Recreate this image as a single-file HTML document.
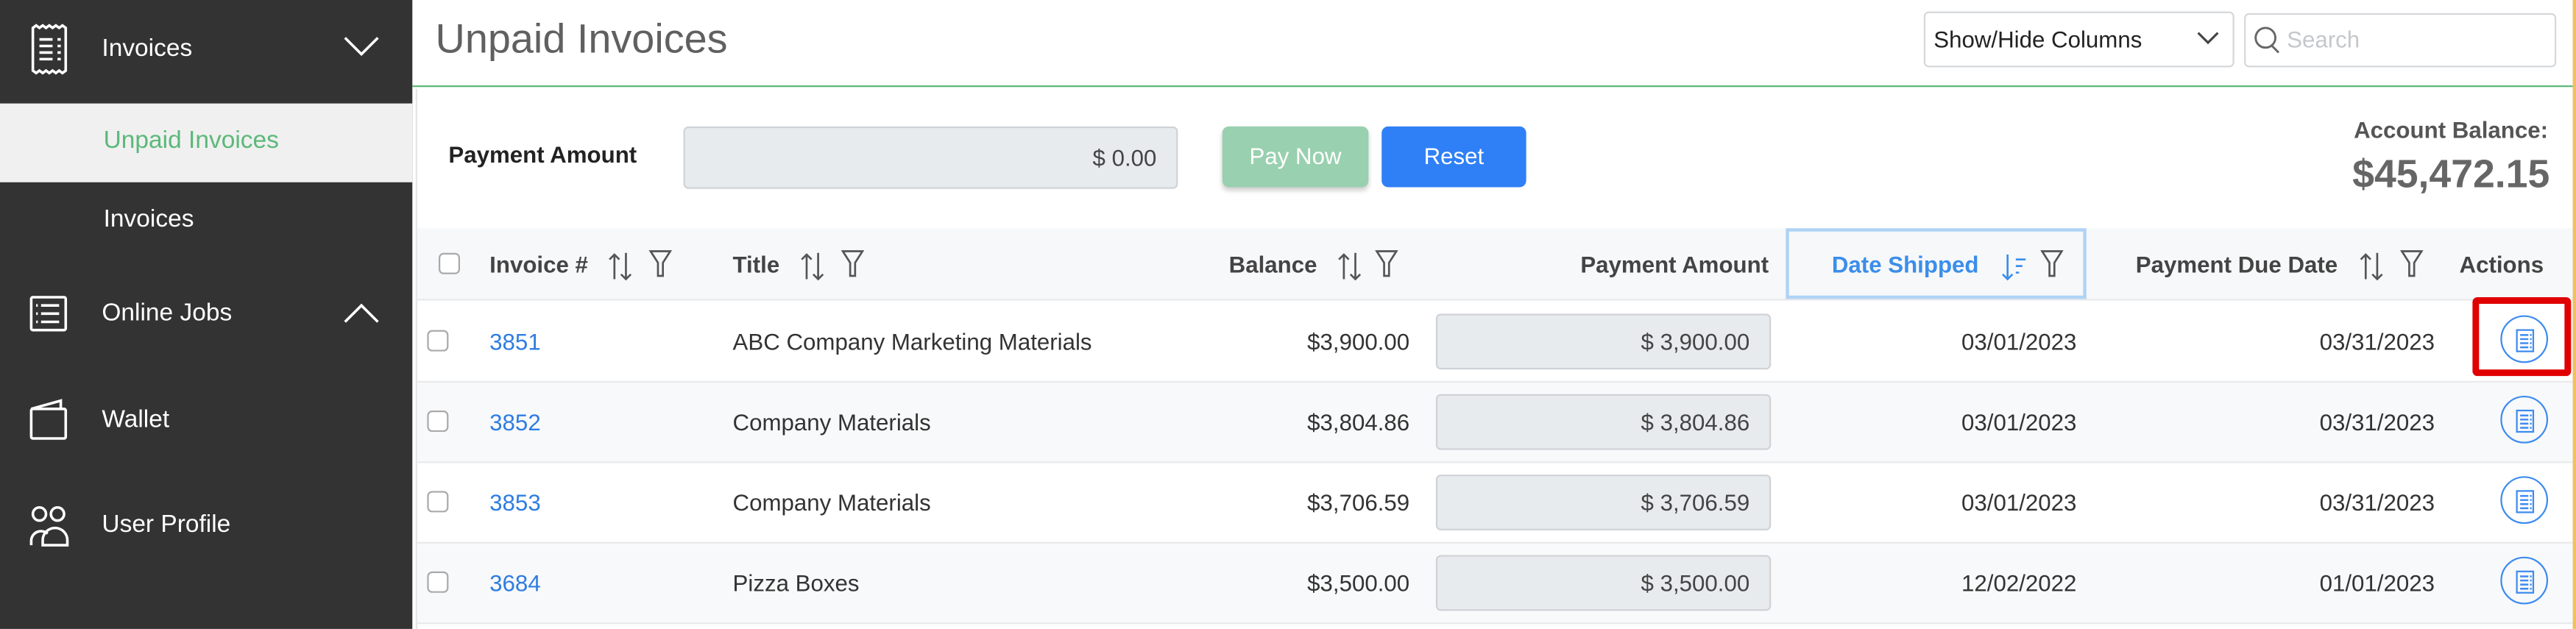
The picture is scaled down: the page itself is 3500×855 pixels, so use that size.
<!DOCTYPE html>
<html><head><meta charset="utf-8"><style>
*{box-sizing:border-box;margin:0;padding:0}
html,body{width:3500px;height:854px;overflow:hidden;background:#fff}
#s{position:absolute;left:0;top:0;width:1568px;height:383px;transform:scale(2.23214);transform-origin:0 0;font-family:"Liberation Sans",sans-serif;font-size:14px;color:#333}
.a{position:absolute}
.side{left:0;top:0;width:251px;height:383px;background:#333}
.w{color:#fff;font-size:15px}
.hd{font-weight:bold;color:#444;font-size:14px}
.cb{width:13px;height:13px;border:1px solid #aaa;border-radius:3px;background:#fff}
.lnk{color:#2f7de1}
.inp{background:#e8ebee;border:1px solid #cfd3d7;border-radius:3px;text-align:right;padding-right:12px;color:#444}
.ac{width:29px;height:29px;border:1.5px solid #3d8bf0;border-radius:50%}
.r{text-align:right}
</style></head><body><div id="s">
<div class="a side"></div>
<svg class="a" style="left:18px;top:14px" width="24" height="32" viewBox="0 0 24 32" fill="none" stroke="#fff" stroke-width="1.6"><path d="M2 3 l2 -1.5 2 1.5 2 -1.5 2 1.5 2 -1.5 2 1.5 2 -1.5 2 1.5 2 -1.5 2 1.5 V29 l-2 1.5 -2 -1.5 -2 1.5 -2 -1.5 -2 1.5 -2 -1.5 -2 1.5 -2 -1.5 -2 1.5 -2 -1.5Z"/><path d="M6 10h8M6 14h8M6 18h8M6 22h8M17 10h2M17 14h2M17 18h2M17 22h2"/></svg>
<div class="a w" style="left:62px;top:21px">Invoices</div>
<svg class="a" style="left:209px;top:22px" width="22" height="12"><path d="M1 1l10 10 10-10" fill="none" stroke="#fff" stroke-width="1.6"/></svg>
<div class="a" style="left:0;top:63px;width:251px;height:48px;background:#f0f0f0"></div>
<div class="a" style="left:63px;top:77px;color:#5cb87a;font-size:15px">Unpaid Invoices</div>
<div class="a w" style="left:63px;top:125px">Invoices</div>
<svg class="a" style="left:18px;top:180px" width="23" height="22" fill="none" stroke="#fff" stroke-width="1.6"><rect x="1" y="1" width="21" height="20" rx="1"/><path d="M7 6h11M7 11h11M7 16h11M4 6h1M4 11h1M4 16h1"/></svg>
<div class="a w" style="left:62px;top:182px">Online Jobs</div>
<svg class="a" style="left:209px;top:184px" width="22" height="13"><path d="M1 12l10-10 10 10" fill="none" stroke="#fff" stroke-width="1.6"/></svg>
<svg class="a" style="left:18px;top:242px" width="23" height="26" fill="none" stroke="#fff" stroke-width="1.6"><rect x="1" y="7" width="21" height="18" rx="1"/><path d="M1 7l18-5v5"/></svg>
<div class="a w" style="left:62px;top:247px">Wallet</div>
<svg class="a" style="left:18px;top:308px" width="25" height="25" fill="none" stroke="#fff" stroke-width="1.6"><circle cx="6" cy="5" r="4"/><circle cx="17" cy="5" r="4"/><path d="M1 24v-3a6 6 0 0 1 10-4M8 24v-3a7 7 0 0 1 15 0v3z"/></svg>
<div class="a w" style="left:62px;top:311px">User Profile</div>

<div class="a" style="left:265px;top:10px;font-size:25px;color:#606060">Unpaid Invoices</div>
<div class="a" style="left:1171px;top:7px;width:189px;height:34px;border:1px solid #d5d8db;border-radius:3px"></div>
<div class="a" style="left:1177px;top:16px;color:#222">Show/Hide Columns</div>
<svg class="a" style="left:1337px;top:19px" width="14" height="9"><path d="M1 1l6 6 6-6" fill="none" stroke="#444" stroke-width="1.4"/></svg>
<div class="a" style="left:1366px;top:8px;width:190px;height:33px;border:1px solid #d5d8db;border-radius:3px"></div>
<svg class="a" style="left:1372px;top:16px" width="16" height="17" fill="none" stroke="#666" stroke-width="1.3"><circle cx="7" cy="7" r="6"/><path d="M11 12l4 4"/></svg>
<div class="a" style="left:1392px;top:16px;color:#c4c8cc">Search</div>
<div class="a" style="left:251px;top:52px;width:1315px;height:1px;background:#5cb87a"></div>
<div class="a" style="left:253px;top:54px;width:1px;height:329px;background:#e6e6e6"></div>
<div class="a" style="left:1566px;top:0;width:2px;height:383px;background:#f2c060"></div>

<div class="a hd" style="left:273px;top:86px;color:#222">Payment Amount</div>
<div class="a inp" style="left:416px;top:77px;width:301px;height:38px;line-height:36px">$ 0.00</div>
<div class="a" style="left:744px;top:77px;width:89px;height:37px;border-radius:4px;background:#99d0af;color:#fff;text-align:center;line-height:37px;box-shadow:0 2px 3px rgba(0,0,0,.2)">Pay Now</div>
<div class="a" style="left:841px;top:77px;width:88px;height:37px;border-radius:4px;background:#2f80f6;color:#fff;text-align:center;line-height:36px">Reset</div>
<div class="a hd r" style="left:1351px;top:71px;width:200px;color:#555">Account Balance:</div>
<div class="a r" style="left:1351px;top:93px;width:201px;font-size:24px;font-weight:bold;color:#666">$45,472.15</div>

<div class="a" style="left:254px;top:139px;width:1312px;height:44px;background:#f7f8fa;border-bottom:1px solid #e6e8ea"></div>
<div class="a" style="left:1087px;top:139px;width:183px;height:43px;border:2px solid #afd3f5"></div>
<div class="a cb" style="left:267px;top:154px"></div>
<div class="a hd" style="left:298px;top:153px">Invoice #</div>
<div class="a hd" style="left:446px;top:153px">Title</div>
<div class="a hd" style="left:748px;top:153px">Balance</div>
<div class="a hd" style="left:962px;top:153px">Payment Amount</div>
<div class="a hd" style="left:1115px;top:153px;color:#3b8eea">Date Shipped</div>
<div class="a hd" style="left:1300px;top:153px">Payment Due Date</div>
<div class="a hd" style="left:1497px;top:153px">Actions</div>
<svg width="0" height="0" style="position:absolute"><defs>
<g id="so" fill="none" stroke="#555" stroke-width="1.2"><path d="M4 17V2M1 5l3-3 3 3M11 1v16M8 14l3 3 3-3"/></g>
<g id="fi" fill="none" stroke="#555" stroke-width="1.2"><path d="M1 1h12l-4.5 7v8h-3v-8z"/></g>
<g id="ac" fill="none" stroke="#3d8bf0" stroke-width="1"><path d="M1 1h10v13H1z"/><path d="M3 4h5M3 6.5h5M3 9h5M3 11.5h5M9 4h1M9 6.5h1M9 9h1M9 11.5h1" stroke-width="1.1"/></g>
</defs></svg>
<svg class="a" style="left:370px;top:153px" width="16" height="19"><use href="#so"/></svg>
<svg class="a" style="left:395px;top:152px" width="14" height="18"><use href="#fi"/></svg>
<svg class="a" style="left:487px;top:153px" width="16" height="19"><use href="#so"/></svg>
<svg class="a" style="left:512px;top:152px" width="14" height="18"><use href="#fi"/></svg>
<svg class="a" style="left:814px;top:153px" width="16" height="19"><use href="#so"/></svg>
<svg class="a" style="left:837px;top:152px" width="14" height="18"><use href="#fi"/></svg>
<svg class="a" style="left:1218px;top:154px" width="16" height="18" fill="none" stroke="#3b8eea" stroke-width="1.2"><path d="M4 1v15M1 13l3 3 3-3M9 4h6M9 8h4M9 12h2"/></svg>
<svg class="a" style="left:1242px;top:152px" width="14" height="18"><use href="#fi"/></svg>
<svg class="a" style="left:1436px;top:153px" width="16" height="19"><use href="#so"/></svg>
<svg class="a" style="left:1461px;top:152px" width="14" height="18"><use href="#fi"/></svg>

<div class="a" style="left:254px;top:232px;width:1312px;height:49px;background:#f8f9fa"></div>
<div class="a" style="left:254px;top:330px;width:1312px;height:49px;background:#f8f9fa"></div>
<div class="a" style="left:254px;top:232px;width:1312px;height:1px;background:#e8eaec"></div>
<div class="a" style="left:254px;top:281px;width:1312px;height:1px;background:#e8eaec"></div>
<div class="a" style="left:254px;top:330px;width:1312px;height:1px;background:#e8eaec"></div>
<div class="a" style="left:254px;top:379px;width:1312px;height:1px;background:#e8eaec"></div>

<div class="a cb" style="left:260px;top:201px"></div><div class="a lnk" style="left:298px;top:200px">3851</div><div class="a" style="left:446px;top:200px">ABC Company Marketing Materials</div><div class="a r" style="left:700px;top:200px;width:158px">$3,900.00</div><div class="a inp" style="left:874px;top:191px;width:204px;height:34px;line-height:33px">$ 3,900.00</div><div class="a r" style="left:1100px;top:200px;width:164px">03/01/2023</div><div class="a r" style="left:1322px;top:200px;width:160px">03/31/2023</div>
<div class="a cb" style="left:260px;top:250px"></div><div class="a lnk" style="left:298px;top:249px">3852</div><div class="a" style="left:446px;top:249px">Company Materials</div><div class="a r" style="left:700px;top:249px;width:158px">$3,804.86</div><div class="a inp" style="left:874px;top:240px;width:204px;height:34px;line-height:33px">$ 3,804.86</div><div class="a r" style="left:1100px;top:249px;width:164px">03/01/2023</div><div class="a r" style="left:1322px;top:249px;width:160px">03/31/2023</div>
<div class="a cb" style="left:260px;top:299px"></div><div class="a lnk" style="left:298px;top:298px">3853</div><div class="a" style="left:446px;top:298px">Company Materials</div><div class="a r" style="left:700px;top:298px;width:158px">$3,706.59</div><div class="a inp" style="left:874px;top:289px;width:204px;height:34px;line-height:33px">$ 3,706.59</div><div class="a r" style="left:1100px;top:298px;width:164px">03/01/2023</div><div class="a r" style="left:1322px;top:298px;width:160px">03/31/2023</div>
<div class="a cb" style="left:260px;top:348px"></div><div class="a lnk" style="left:298px;top:347px">3684</div><div class="a" style="left:446px;top:347px">Pizza Boxes</div><div class="a r" style="left:700px;top:347px;width:158px">$3,500.00</div><div class="a inp" style="left:874px;top:338px;width:204px;height:34px;line-height:33px">$ 3,500.00</div><div class="a r" style="left:1100px;top:347px;width:164px">12/02/2022</div><div class="a r" style="left:1322px;top:347px;width:160px">01/01/2023</div>

<div class="a ac" style="left:1522px;top:192px"></div><svg class="a" style="left:1531px;top:200px" width="12" height="15"><use href="#ac"/></svg>
<div class="a ac" style="left:1522px;top:241px"></div><svg class="a" style="left:1531px;top:249px" width="12" height="15"><use href="#ac"/></svg>
<div class="a ac" style="left:1522px;top:290px"></div><svg class="a" style="left:1531px;top:298px" width="12" height="15"><use href="#ac"/></svg>
<div class="a ac" style="left:1522px;top:339px"></div><svg class="a" style="left:1531px;top:347px" width="12" height="15"><use href="#ac"/></svg>
<div class="a" style="left:1505px;top:181px;width:60px;height:48px;border:4px solid #e00000;border-radius:3px"></div>
</div></body></html>
